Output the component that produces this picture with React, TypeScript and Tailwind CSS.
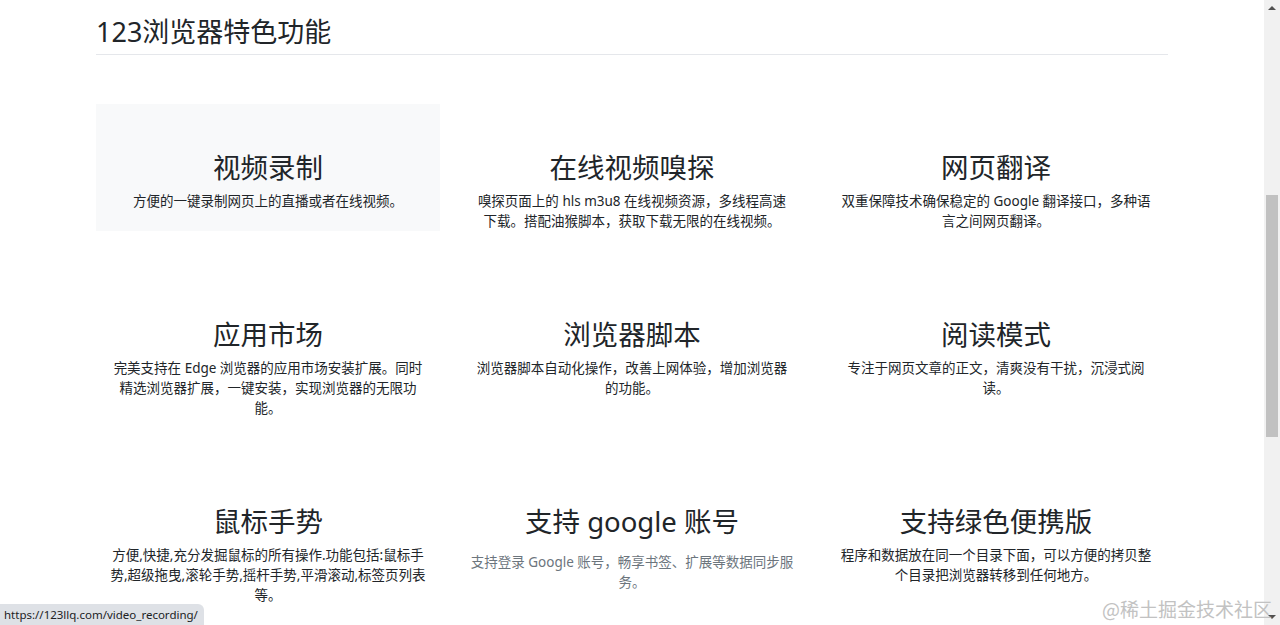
const FEATURES = [
  {
    title: "视频录制",
    desc: ["方便的一键录制网页上的直播或者在线视频。"],
    active: true,
  },
  {
    title: "在线视频嗅探",
    desc: ["嗅探页面上的 hls m3u8 在线视频资源，多线程高速", "下载。搭配油猴脚本，获取下载无限的在线视频。"],
  },
  {
    title: "网页翻译",
    desc: ["双重保障技术确保稳定的 Google 翻译接口，多种语", "言之间网页翻译。"],
  },
  {
    title: "应用市场",
    desc: [
      "完美支持在 Edge 浏览器的应用市场安装扩展。同时",
      "精选浏览器扩展，一键安装，实现浏览器的无限功",
      "能。",
    ],
  },
  {
    title: "浏览器脚本",
    desc: ["浏览器脚本自动化操作，改善上网体验，增加浏览器", "的功能。"],
  },
  {
    title: "阅读模式",
    desc: ["专注于网页文章的正文，清爽没有干扰，沉浸式阅", "读。"],
  },
  {
    title: "鼠标手势",
    desc: [
      "方便,快捷,充分发掘鼠标的所有操作.功能包括:鼠标手",
      "势,超级拖曳,滚轮手势,摇杆手势,平滑滚动,标签页列表",
      "等。",
    ],
  },
  {
    title: "支持 google 账号",
    desc: ["支持登录 Google 账号，畅享书签、扩展等数据同步服", "务。"],
    muted: true,
  },
  {
    title: "支持绿色便携版",
    desc: ["程序和数据放在同一个目录下面，可以方便的拷贝整", "个目录把浏览器转移到任何地方。"],
  },
];

const FONT = { fontFamily: '"Noto Sans", "Noto Sans CJK SC", sans-serif' };

function Scrollbar() {
  return (
    <div className="w-4 h-full bg-[#f1f1f1] flex flex-col items-center">
      <div className="h-4 flex items-center justify-center">
        <div className="w-0 h-0 border-l-[4px] border-r-[4px] border-b-[4px] border-l-transparent border-r-transparent border-b-[#505050]" />
      </div>
      <div className="h-[179px]" />
      <div className="w-3 h-[242px] bg-[#c1c1c1]" />
      <div className="flex-1" />
      <div className="h-4 flex items-center justify-center">
        <div className="w-0 h-0 border-l-[4px] border-r-[4px] border-t-[4px] border-l-transparent border-r-transparent border-t-[#505050]" />
      </div>
    </div>
  );
}

export default function App() {
  return (
    <div className="relative h-[625px] w-[1280px] overflow-hidden bg-white flex" style={FONT}>
      <div className="flex-1 h-full overflow-hidden">
        <div className="w-[1072px] mx-auto">
          <h2 className="pt-[14px] pb-1 text-[27px] leading-9 font-normal text-[#212529] border-b border-[#e5e7eb]">
            123浏览器特色功能
          </h2>

          <div className="mt-[49px] grid grid-cols-3 gap-x-5 gap-y-10">
            {FEATURES.map((f) => (
              <div
                key={f.title}
                className={
                  f.active
                    ? "bg-[#f8f9fa] pt-[47px] px-[10px] text-center"
                    : "pt-[47px] px-[10px] text-center"
                }
              >
                <h3 className="text-[27.5px] leading-[34px] font-normal text-[#212529]">
                  {f.title}
                </h3>
                <p
                  className={
                    f.muted
                      ? "mt-[13px] text-[13.5px] leading-5 text-[#6c757d] whitespace-nowrap"
                      : "mt-[6px] text-[13.5px] leading-5 text-[#212529] whitespace-nowrap"
                  }
                >
                  {f.desc.map((line, i) => (
                    <span key={i} className="block">
                      {line}
                    </span>
                  ))}
                </p>
              </div>
            ))}
          </div>
        </div>
      </div>

      <Scrollbar />

      <div className="absolute left-0 bottom-0 h-[21px] bg-[#dee1e6] rounded-tr-md pl-1 pr-1.5 flex items-center text-[11.5px] text-[#202124]">
        https://123llq.com/video_recording/
      </div>

      <div
        className="absolute right-[8px] bottom-[6px] text-[19px] leading-5 text-[#c2c2c2]"
        style={{ fontFamily: '"Noto Sans CJK SC", serif' }}
      >
        @稀土掘金技术社区
      </div>
    </div>
  );
}
